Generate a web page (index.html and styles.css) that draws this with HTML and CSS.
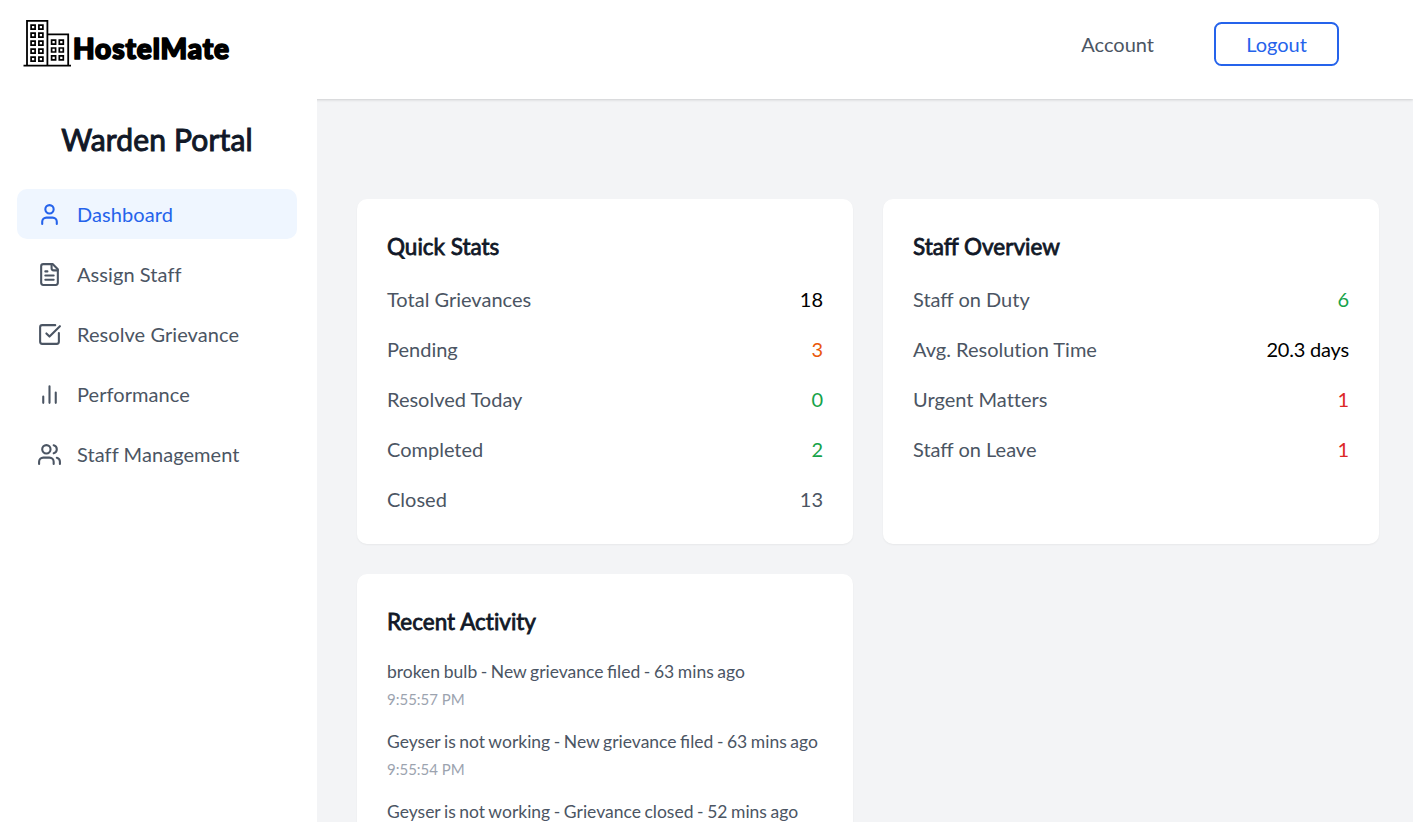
FILE: index.html
```html
<!DOCTYPE html>
<html lang="en">
<head>
<meta charset="utf-8">
<title>HostelMate</title>
<link rel="stylesheet" href="styles.css">
</head>
<body>
<header class="topbar">
  <svg class="logo" width="212" height="56" viewBox="20 14 212 56" role="img" aria-label="HostelMate">
    <g fill="none" stroke="#000">
      <path stroke-width="1.8" d="M27 65V20.9h20.4V65M48 34.3h20.2V65M23.5 65.6h47.5"/>
      <path stroke-width="1.7" d="M31.1 25.1h4v4h-4zM38.9 25.1h4v4h-4zM31.1 33.1h4v4h-4zM38.9 33.1h4v4h-4zM31.1 41.1h4v4h-4zM38.9 41.1h4v4h-4zM31.1 49.1h4v4h-4zM38.9 49.1h4v4h-4zM31.1 57.1h4v4h-4zM38.9 57.1h4v4h-4zM51.6 40.1h4v4h-4zM59.3 40.1h4v4h-4zM51.6 48h4v4h-4zM59.3 48h4v4h-4zM51.6 55.9h4v4h-4zM59.3 55.9h4v4h-4z"/>
    </g>
    <text class="logo-text" x="73" y="58.7" textLength="156" lengthAdjust="spacing">HostelMate</text>
  </svg>
  <nav class="actions">
    <a class="account">Account</a>
    <button class="logout">Logout</button>
  </nav>
</header>
<div class="shell">
  <aside class="sidebar">
    <h2 class="portal">Warden Portal</h2>
    <nav class="menu">
      <a class="item active"><svg class="icon" viewBox="0 0 24 24"><path d="M19 21v-2a4 4 0 0 0-4-4H9a4 4 0 0 0-4 4v2"/><circle cx="12" cy="7" r="4"/></svg>Dashboard</a>
      <a class="item"><svg class="icon" viewBox="0 0 24 24"><path d="M15 2H6a2 2 0 0 0-2 2v16a2 2 0 0 0 2 2h12a2 2 0 0 0 2-2V7Z"/><path d="M14 2v4a2 2 0 0 0 2 2h4M10 9H8M16 13H8M16 17H8"/></svg>Assign Staff</a>
      <a class="item"><svg class="icon" viewBox="0 0 24 24"><path d="M21 10.5V19a2 2 0 0 1-2 2H5a2 2 0 0 1-2-2V5a2 2 0 0 1 2-2h12.5"/><path d="m9 11 3 3L22 4"/></svg>Resolve Grievance</a>
      <a class="item"><svg class="icon" viewBox="0 0 24 24"><path d="M18 20V10M12 20V4M6 20v-6"/></svg>Performance</a>
      <a class="item"><svg class="icon" viewBox="0 0 24 24"><path d="M16 21v-2a4 4 0 0 0-4-4H6a4 4 0 0 0-4 4v2"/><circle cx="9" cy="7" r="4"/><path d="M22 21v-2a4 4 0 0 0-3-3.87M16 3.13a4 4 0 0 1 0 7.75"/></svg>Staff Management</a>
    </nav>
  </aside>
  <main class="content">
    <section class="card">
      <h3 class="title">Quick Stats</h3>
      <div class="rows">
        <div class="row"><span>Total Grievances</span><span class="black">18</span></div>
        <div class="row"><span>Pending</span><span class="orange">3</span></div>
        <div class="row"><span>Resolved Today</span><span class="green">0</span></div>
        <div class="row"><span>Completed</span><span class="green">2</span></div>
        <div class="row"><span>Closed</span><span>13</span></div>
      </div>
    </section>
    <section class="card">
      <h3 class="title">Staff Overview</h3>
      <div class="rows">
        <div class="row"><span>Staff on Duty</span><span class="green">6</span></div>
        <div class="row plain"><span>Avg. Resolution Time</span><span class="black days">20.3 days</span></div>
        <div class="row plain"><span>Urgent Matters</span><span class="red">1</span></div>
        <div class="row"><span>Staff on Leave</span><span class="red">1</span></div>
      </div>
    </section>
    <section class="card">
      <h3 class="title plain">Recent Activity</h3>
      <div class="rows">
        <div class="event"><p class="what">broken bulb - New grievance filed - 63 mins ago</p><p class="when">9:55:57 PM</p></div>
        <div class="event"><p class="what">Geyser is not working - New grievance filed - 63 mins ago</p><p class="when">9:55:54 PM</p></div>
        <div class="event"><p class="what">Geyser is not working - Grievance closed - 52 mins ago</p></div>
      </div>
    </section>
  </main>
</div>
</body>
</html>
```
FILE: styles.css
```css
* { box-sizing: border-box; }
body {
  margin: 0;
  height: 822px;
  overflow: hidden;
  display: flex;
  flex-direction: column;
  font: 400 20px/30px Lato, sans-serif;
  color: #4b5563;
  background: #f3f4f6;
}
h2, h3, p { margin: 0; }
.topbar {
  flex: none;
  height: 99px;
  padding: 14px 74px 0 20px;
  display: flex;
  justify-content: space-between;
  align-items: flex-start;
  background: #fff;
  box-shadow: 0 1px 3px rgba(0, 0, 0, .1), 0 1px 2px rgba(0, 0, 0, .06);
}
.logo { display: block; }
.logo-text { font: 900 28px Lato, sans-serif; fill: #000; stroke: #000; stroke-width: 1.7px; stroke-linejoin: round; }
.actions { display: flex; align-items: center; gap: 60px; padding-top: 8px; }
.logout {
  width: 125px;
  height: 44px;
  padding: 0;
  font: inherit;
  color: #2563eb;
  background: #fff;
  border: 2px solid #2563eb;
  border-radius: 7.5px;
}
.shell { flex: 1; min-height: 0; display: flex; }
.sidebar { position: relative; width: 317px; flex: none; padding: 20px 20px 0 17px; background: #fff; }
.portal {
  font-size: 30px;
  line-height: 40px;
  font-weight: 400;
  letter-spacing: .15px;
  text-align: center;
  color: #111827;
  -webkit-text-stroke: 1px #111827;
}
.menu { display: flex; flex-direction: column; gap: 10px; margin-top: 30px; letter-spacing: .07px; }
.item { display: flex; align-items: center; gap: 15px; height: 50px; padding-left: 20px; border-radius: 10px; }
.active { background: #eff6ff; color: #2563eb; }
.icon { width: 25px; height: 25px; fill: none; stroke: currentColor; stroke-width: 2; stroke-linecap: round; stroke-linejoin: round; }
.content {
  flex: 1;
  display: grid;
  grid-template-columns: 496px 496px;
  grid-template-rows: 345px 345px;
  gap: 30px;
  padding: 100px 0 0 40px;
}
.card { padding: 30px; background: #fff; border-radius: 10px; box-shadow: 0 1px 2px rgba(0, 0, 0, .05); }
.title {
  font-size: 22.5px;
  line-height: 35px;
  font-weight: 400;
  color: #111827;
  -webkit-text-stroke: .8px #111827;
  margin-bottom: 20px;
}
.plain { font-variant-ligatures: none; }
.days { letter-spacing: -.2px; }
.rows { display: flex; flex-direction: column; gap: 20px; }
.row { display: flex; justify-content: space-between; }
.black { color: #000; }
.orange { color: #ea580c; }
.green { color: #16a34a; }
.red { color: #dc2626; }
.event { display: flex; flex-direction: column; gap: 5px; }
.what { font-size: 17.5px; line-height: 25px; white-space: nowrap; word-spacing: -.9px; }
.when { font-size: 15px; line-height: 20px; color: #9ca3af; }
```
